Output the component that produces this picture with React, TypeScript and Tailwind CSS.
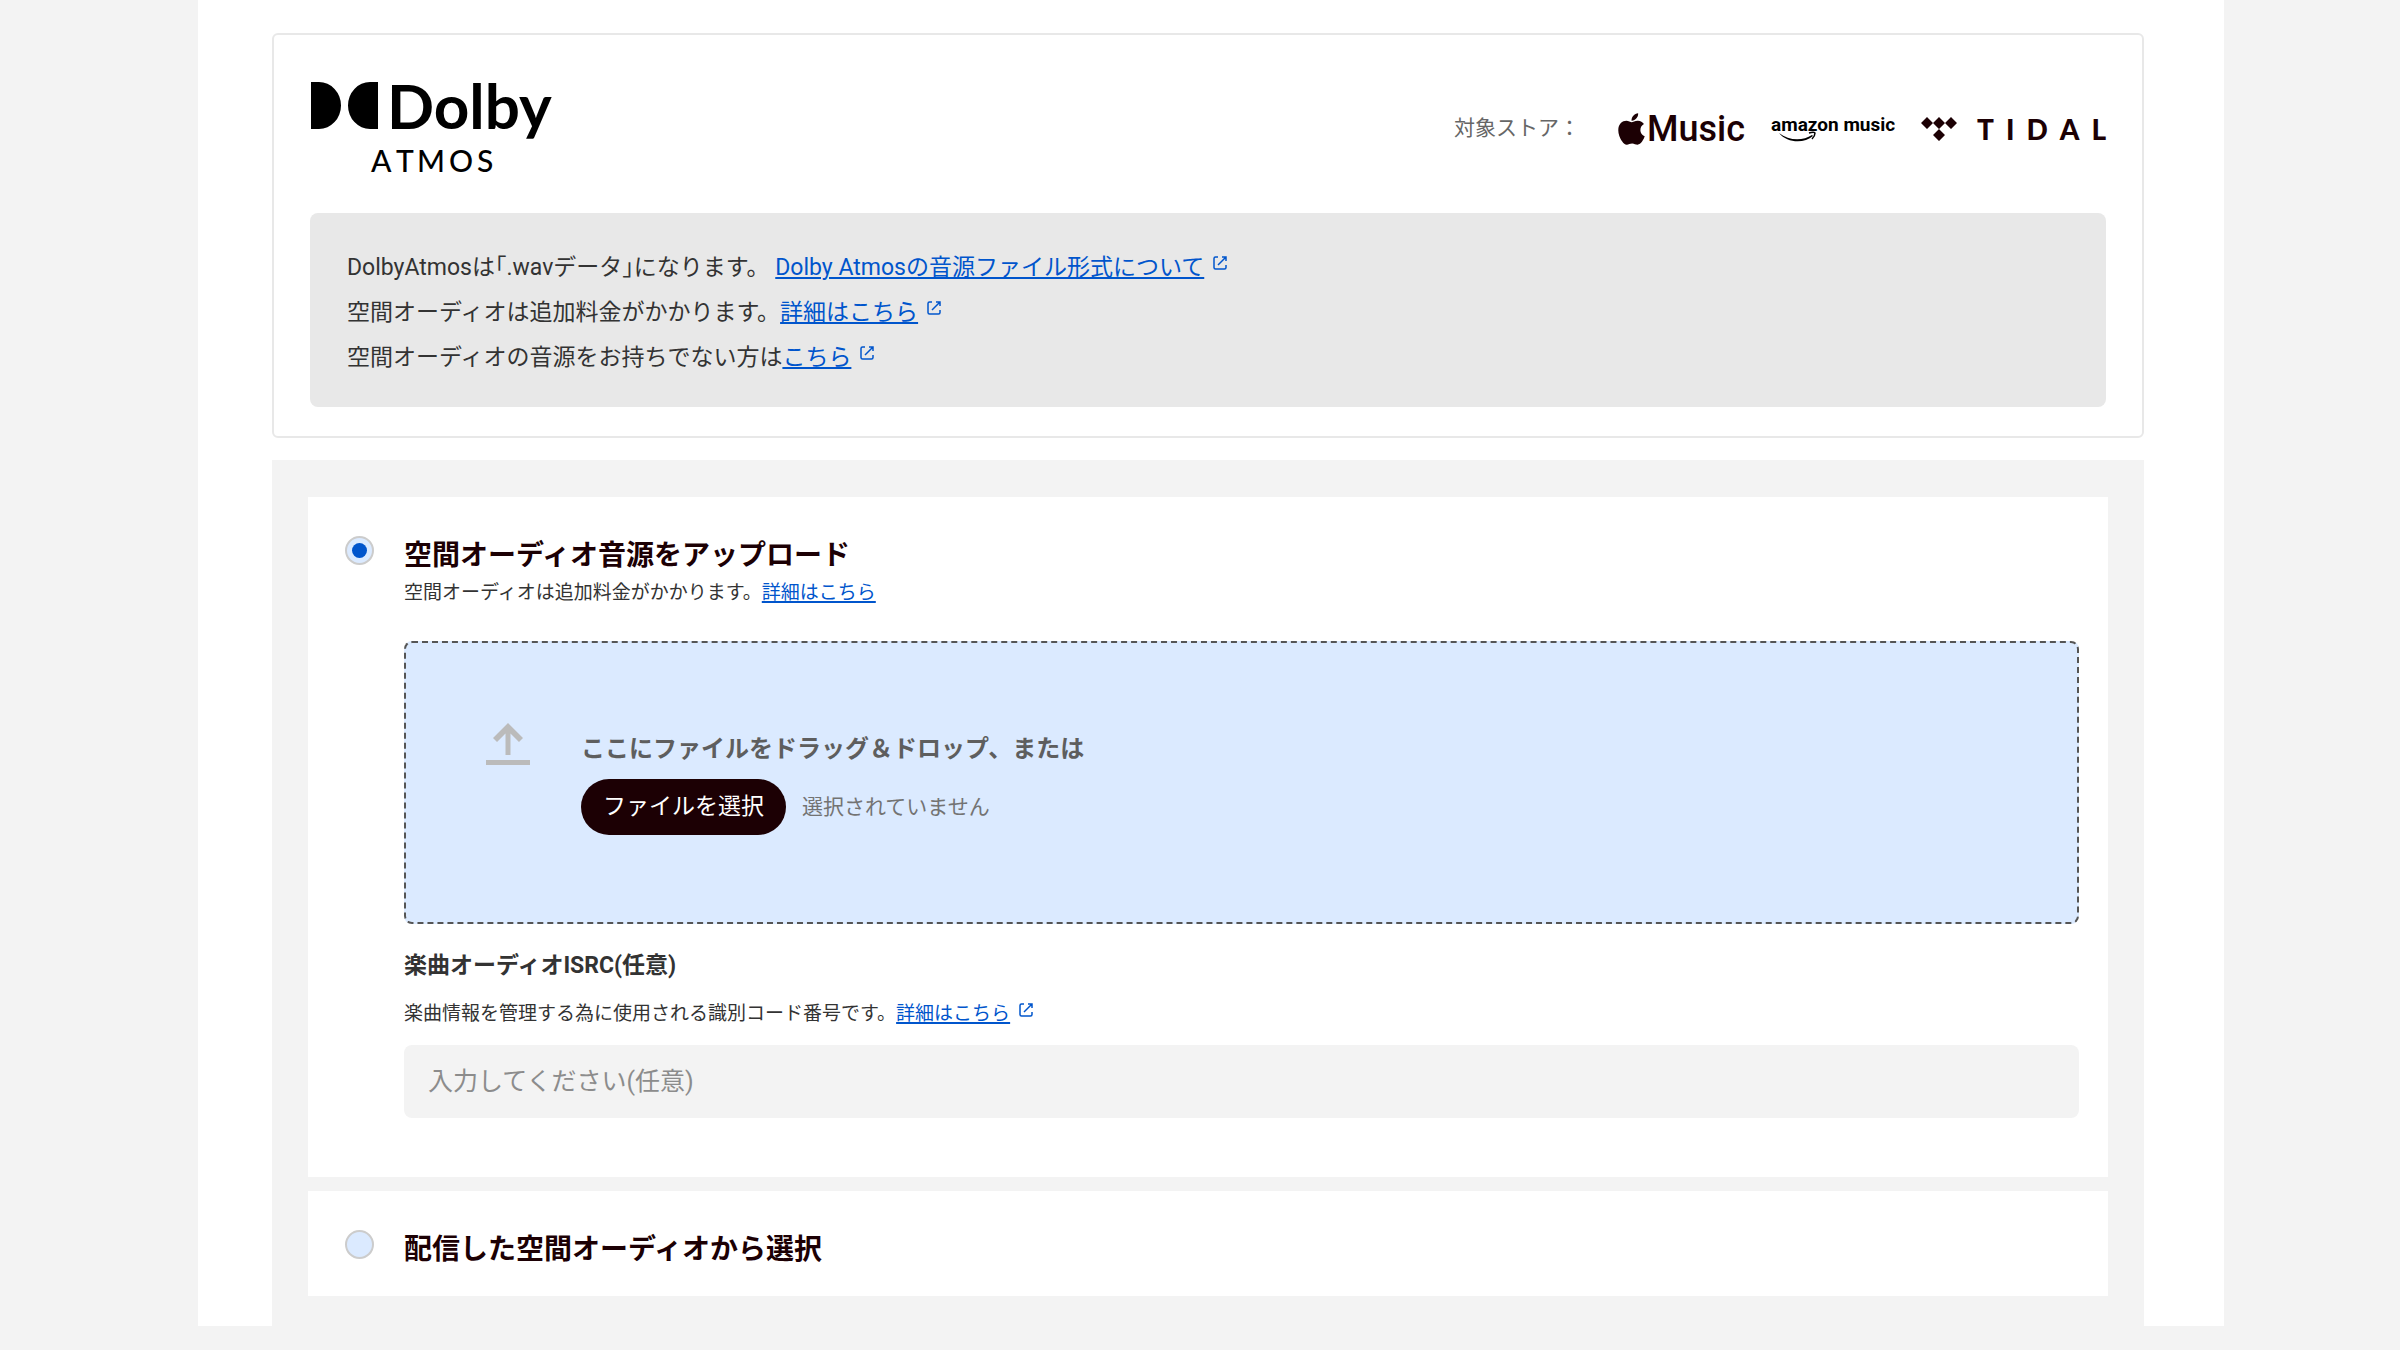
import React, { useRef, useState } from 'react';
import { FaApple } from 'react-icons/fa';

const DolbyAtmosLogo: React.FC = () => (
  <svg viewBox="0 -15 256 123" className="w-64 h-[123px]" role="img" aria-label="Dolby Atmos">
    <path d="M1 2h8a22 23.5 0 0 1 0 47H1z" />
    <path d="M68 2h-8a22 23.5 0 0 0 0 47h8z" />
    <text x="77" y="49" className="font-['Lato',sans-serif] font-bold text-[62px]">Dolby</text>
    <g className="font-['Lato',sans-serif] font-medium text-[30px]">
      <text x="61" y="92">A</text>
      <text x="86" y="92">T</text>
      <text x="107" y="92">M</text>
      <text x="139" y="92">O</text>
      <text x="167" y="92">S</text>
    </g>
  </svg>
);

const AppleMusicLogo: React.FC = () => (
  <span className="flex items-center gap-0.5 text-[#1c0004]">
    <FaApple className="w-[27px] h-9" />
    <span className="font-['Roboto',sans-serif] font-medium text-[36px] leading-11">Music</span>
  </span>
);

const AmazonMusicLogo: React.FC = () => (
  <svg viewBox="0 0 124 36" className="w-[124px] h-9" role="img" aria-label="amazon music">
    <text x="0" y="20" className="font-['Roboto',sans-serif] font-bold text-[19px]">amazon music</text>
    <path d="M8 22c10 8 24 8 33 2l1 1c-9 8-26 7-34-3z" />
    <path d="M38 22c3-1 6-1 6 0s-1 4-3 6" fill="none" stroke="black" strokeWidth="1.5" />
  </svg>
);

const TidalLogo: React.FC = () => (
  <span className="flex items-center gap-5 text-[#1c0004]">
    <svg viewBox="0 0 36 24" className="w-9 h-6" fill="currentColor">
      <path d="M6 0l6 6-6 6-6-6zM18 0l6 6-6 6-6-6zM30 0l6 6-6 6-6-6zM18 12l6 6-6 6-6-6z" />
    </svg>
    <span className="flex gap-3 font-['Lato',sans-serif] font-black text-[28px] leading-9">
      {['T', 'I', 'D', 'A', 'L'].map((letter) => (
        <span key={letter}>{letter}</span>
      ))}
    </span>
  </span>
);

const ExternalIcon: React.FC = () => (
  <svg viewBox="0 0 16 16" className="inline-block w-4 h-4 ml-2 mb-[0.5em] text-[#0055cc]" fill="none" stroke="currentColor" strokeWidth="1.5">
    <path d="M6 2H3.500Q2 2 2 3.500v9Q2 14 3.500 14h9q1.500 0 1.500-1.500V10M10 2h4v4M14 2L6 10" />
  </svg>
);

const UploadIcon: React.FC = () => (
  <svg viewBox="0 0 44 42" className="w-11 h-[42px] shrink-0" fill="#bbbbbb">
    <path d="M22 0l15 15-4 4-8.500-8.500V32h-5V10.500L11 19l-4-4zM0 37h44v5H0z" />
  </svg>
);

interface TextLinkProps {
  children: React.ReactNode;
  external?: boolean;
}

const TextLink: React.FC<TextLinkProps> = ({ children, external }) => (
  <>
    <a href="#" className="text-[#0055cc] underline decoration-2 underline-offset-2">{children}</a>
    {external && <ExternalIcon />}
  </>
);

interface SourceRadioProps {
  id: string;
  checked: boolean;
  onChange: () => void;
}

const SourceRadio: React.FC<SourceRadioProps> = ({ id, checked, onChange }) => (
  <input
    type="radio"
    name="source"
    id={id}
    checked={checked}
    onChange={onChange}
    className="appearance-none grid place-content-center shrink-0 w-[29px] h-[29px] rounded-full border-2 border-[#cccccc] bg-[#dbeaff] checked:before:content-[''] checked:before:w-[15px] checked:before:h-[15px] checked:before:rounded-full checked:before:bg-[#0055cc]"
  />
);

const App: React.FC = () => {
  const [source, setSource] = useState('upload');
  const [fileName, setFileName] = useState('');
  const fileInput = useRef<HTMLInputElement>(null);

  return (
    <div className="min-h-screen bg-[#f3f3f3] pl-[198px] pr-[176px] pb-6 font-['Roboto','Noto_Sans_CJK_JP',sans-serif] text-[#333333]">
      <main className="bg-white pt-[33px] pl-[74px] pr-20">
        <section className="border-2 border-[#e8e8e8] rounded-md px-9 pt-[30px] pb-[29px]">
          <div className="flex items-start justify-between mb-5">
            <DolbyAtmosLogo />
            <div className="flex items-center gap-[26px] h-32">
              <span className="text-[21px] text-[#666666] mr-3">対象ストア：</span>
              <AppleMusicLogo />
              <AmazonMusicLogo />
              <TidalLogo />
            </div>
          </div>
          <div className="bg-[#e8e8e8] rounded-lg px-[37px] pt-8 pb-[27px] text-[23px] leading-[45px]">
            <p>
              DolbyAtmosは<span className="[font-feature-settings:'halt']">「</span>.wavデータ<span className="[font-feature-settings:'halt']">」</span>になります。{' '}
              <TextLink external>Dolby Atmosの音源ファイル形式について</TextLink>
            </p>
            <p>
              空間オーディオは追加料金がかかります。
              <TextLink external>詳細はこちら</TextLink>
            </p>
            <p>
              空間オーディオの音源をお持ちでない方は
              <TextLink external>こちら</TextLink>
            </p>
          </div>
        </section>

        <section className="bg-[#f3f3f3] mt-[22px] px-9 pt-[37px] pb-[30px] space-y-[14px]">
          <div className="bg-white flex items-start gap-[30px] pl-[37px] pr-[29px] pt-[39px] pb-[59px]">
            <SourceRadio id="source-upload" checked={source === 'upload'} onChange={() => setSource('upload')} />
            <div className="flex-1">
              <label htmlFor="source-upload" className="block text-[28px] leading-10 font-bold text-[#1c0004]">
                空間オーディオ音源をアップロード
              </label>
              <p className="text-[19px] leading-[34px]">
                空間オーディオは追加料金がかかります。
                <TextLink>詳細はこちら</TextLink>
              </p>

              <div className="mt-[31px] flex items-start gap-[51px] border-2 border-dashed border-[#555555] rounded-lg bg-[#dbeaff] px-20 pt-20 pb-[87px]">
                <UploadIcon />
                <div className="pt-2">
                  <p className="text-[24px] leading-9 font-bold text-[#5e5e5e]">
                    ここにファイルをドラッグ＆ドロップ、または
                  </p>
                  <div className="mt-3 flex items-baseline gap-4">
                    <button
                      type="button"
                      onClick={() => fileInput.current?.click()}
                      className="h-14 px-[22px] rounded-full bg-[#1c0004] text-white text-[23px]"
                    >
                      ファイルを選択
                    </button>
                    <input
                      ref={fileInput}
                      type="file"
                      accept=".wav"
                      aria-label="ファイルを選択"
                      className="hidden"
                      onChange={(e) => setFileName(e.target.files?.[0]?.name || '')}
                    />
                    <span className="text-[21px] text-[#737373]">{fileName || '選択されていません'}</span>
                  </div>
                </div>
              </div>

              <label htmlFor="isrc" className="block mt-6 text-[23px] leading-9 font-bold">
                楽曲オーディオISRC(任意)
              </label>
              <p className="mt-3 text-[19px] leading-9">
                楽曲情報を管理する為に使用される識別コード番号です。
                <TextLink external>詳細はこちら</TextLink>
              </p>
              <input
                type="text"
                id="isrc"
                placeholder="入力してください(任意)"
                className="mt-[13px] w-full h-[73px] rounded-lg bg-[#f3f3f3] px-6 text-[25px] placeholder:text-[#8c8c8c]"
              />
            </div>
          </div>

          <div className="bg-white flex items-start gap-[30px] pl-[37px] pr-[29px] pt-[39px] pb-[26px]">
            <SourceRadio id="source-released" checked={source === 'released'} onChange={() => setSource('released')} />
            <label htmlFor="source-released" className="text-[28px] leading-10 font-bold text-[#1c0004]">
              配信した空間オーディオから選択
            </label>
          </div>
        </section>
      </main>
    </div>
  );
};

export default App;
